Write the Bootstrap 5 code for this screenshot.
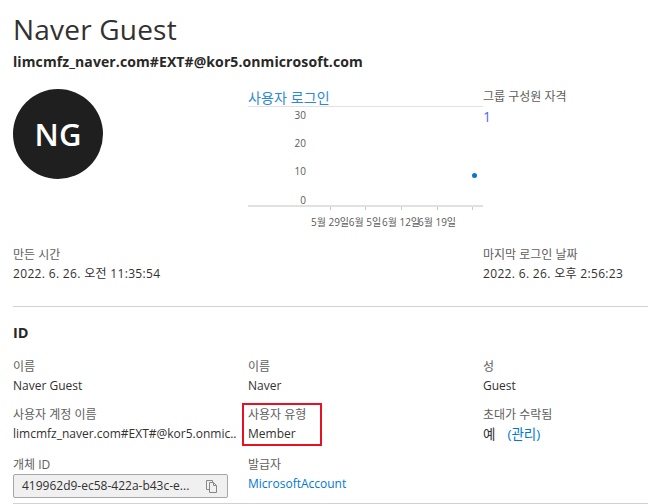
<!DOCTYPE html>
<html lang="ko"><head><meta charset="utf-8">
<link href="https://cdn.jsdelivr.net/npm/bootstrap@5.3.0/dist/css/bootstrap.min.css" rel="stylesheet">
<style>
html,body{height:504px;overflow:hidden;background:#fff}
body{font-family:"Open Sans","Noto Sans CJK KR",sans-serif;color:#323130;font-size:12.5px;line-height:18px}
.shell{width:648px;height:504px;overflow:hidden;padding:11px 0 0 13px}
.ttl{font-size:28px;line-height:36px;font-weight:400;margin:0;color:#323130;letter-spacing:.2px}
.upn{font-size:14px;line-height:20px;font-weight:700;margin-top:5px;color:#292827;letter-spacing:.1px}
.tri{display:grid;grid-template-columns:235px 235px 1fr}
.hero{margin-top:12px;height:163px}
.avatar{width:90px;height:90px;border-radius:50%;background:#1f1f1f;color:#fff;font-size:31px;font-weight:600;margin-top:5px}
.charthd{color:#2b88d8;font-size:14px;line-height:18px;border-bottom:1px solid #e1e1e1;height:22px;padding-top:4px;margin-top:1px;letter-spacing:.1px}
.chartbox{display:block;width:235px;height:124px}
.chartbox text{font-family:"Open Sans","Noto Sans CJK KR",sans-serif;font-size:10px;fill:#5b5a59}
.lbl{font-size:12px;line-height:16px;color:#605e5c}
.toplbl{margin-top:5px}
.val{font-size:12px;line-height:18px;margin-top:2px;color:#323130}
.dt{letter-spacing:.33px}
.kv{font-size:13.5px}
.lnk{color:#0078d4;text-decoration:none}
.cnt{color:#4f6bed;font-size:14px;margin-top:3px}
.rule{height:1px;background:#d2d2d2}
.rule1{margin-top:23px}
.idhd{font-size:14.5px;line-height:20px;font-weight:700;margin:16px 0 0;color:#292827}
.cells{margin-top:16px;grid-template-rows:48px 50px 46px}
.cell{position:relative}
.cut{white-space:nowrap}
.redbox{position:absolute;left:-6px;top:-4px;width:80px;height:43px;border:2px solid #e81123}
.copybox{width:215px;height:24px;background:#f0f0f0;border:1px solid #a6a6a6;border-radius:2px;padding:0 9px 0 8px;margin-top:1px;font-size:12px;color:#323130}
.sp{margin-left:12px}
</style></head><body>
<div class="shell">
<h1 class="ttl">Naver Guest</h1>
<div class="upn">limcmfz_naver.com#EXT#@kor5.onmicrosoft.com</div>
<div class="tri hero">
 <div><div class="avatar d-flex align-items-center justify-content-center">NG</div></div>
 <div>
  <div class="charthd">사용자 로그인</div>
  <svg class="chartbox" viewBox="0 0 235 124">
   <text x="58" y="12" text-anchor="end">30</text>
   <text x="58" y="40" text-anchor="end">20</text>
   <text x="58" y="68" text-anchor="end">10</text>
   <text x="58" y="97" text-anchor="end">0</text>
   <rect x="0" y="98" width="235" height="2" fill="#e1e1e1"/>
   <g stroke="#c8c8c8"><path d="M82.500 100v3M117.500 100v3M153.500 100v3M189.500 100v3M224.500 100v3"/></g>
   <circle cx="226.500" cy="68.500" r="2.500" fill="#0078d4"/>
   <text x="82" y="119" text-anchor="middle">5월 29일</text>
   <text x="117" y="119" text-anchor="middle">6월 5일</text>
   <text x="153" y="119" text-anchor="middle">6월 12일</text>
   <text x="189" y="119" text-anchor="middle">6월 19일</text>
  </svg>
 </div>
 <div>
  <div class="lbl toplbl">그룹 구성원 자격</div>
  <div class="cnt">1</div>
 </div>
</div>
<div class="tri">
 <div><div class="lbl">만든 시간</div><div class="val dt">2022. 6. 26. 오전 11:35:54</div></div>
 <div></div>
 <div><div class="lbl">마지막 로그인 날짜</div><div class="val dt">2022. 6. 26. 오후 2:56:23</div></div>
</div>
<div class="rule rule1"></div>
<h2 class="idhd">ID</h2>
<div class="tri cells">
 <div class="cell"><div class="lbl">이름</div><div class="val">Naver Guest</div></div>
 <div class="cell"><div class="lbl">이름</div><div class="val">Naver</div></div>
 <div class="cell"><div class="lbl">성</div><div class="val">Guest</div></div>
 <div class="cell"><div class="lbl">사용자 계정 이름</div><div class="val cut">limcmfz_naver.com#EXT#@kor5.onmic..</div></div>
 <div class="cell"><div class="redbox"></div><div class="lbl">사용자 유형</div><div class="val">Member</div></div>
 <div class="cell"><div class="lbl">초대가 수락됨</div><div class="val kv">예<a class="lnk sp" href="#">(관리)</a></div></div>
 <div class="cell"><div class="lbl">개체 ID</div><div class="copybox d-flex align-items-center justify-content-between"><span>419962d9-ec58-422a-b43c-e...</span>
  <svg width="12" height="13" viewBox="0 0 12 13" fill="none" stroke="#8a8886"><path d="M3.500 9.500h-3v-9h6v2M3.500 2.500h4l3 3v7h-7zM7.500 2.500v3h3"/></svg></div></div>
 <div class="cell"><div class="lbl">발급자</div><div class="val"><a class="lnk" href="#">MicrosoftAccount</a></div></div>
 <div class="cell"></div>
</div>
<div class="rule"></div>
</div>
</body></html>
